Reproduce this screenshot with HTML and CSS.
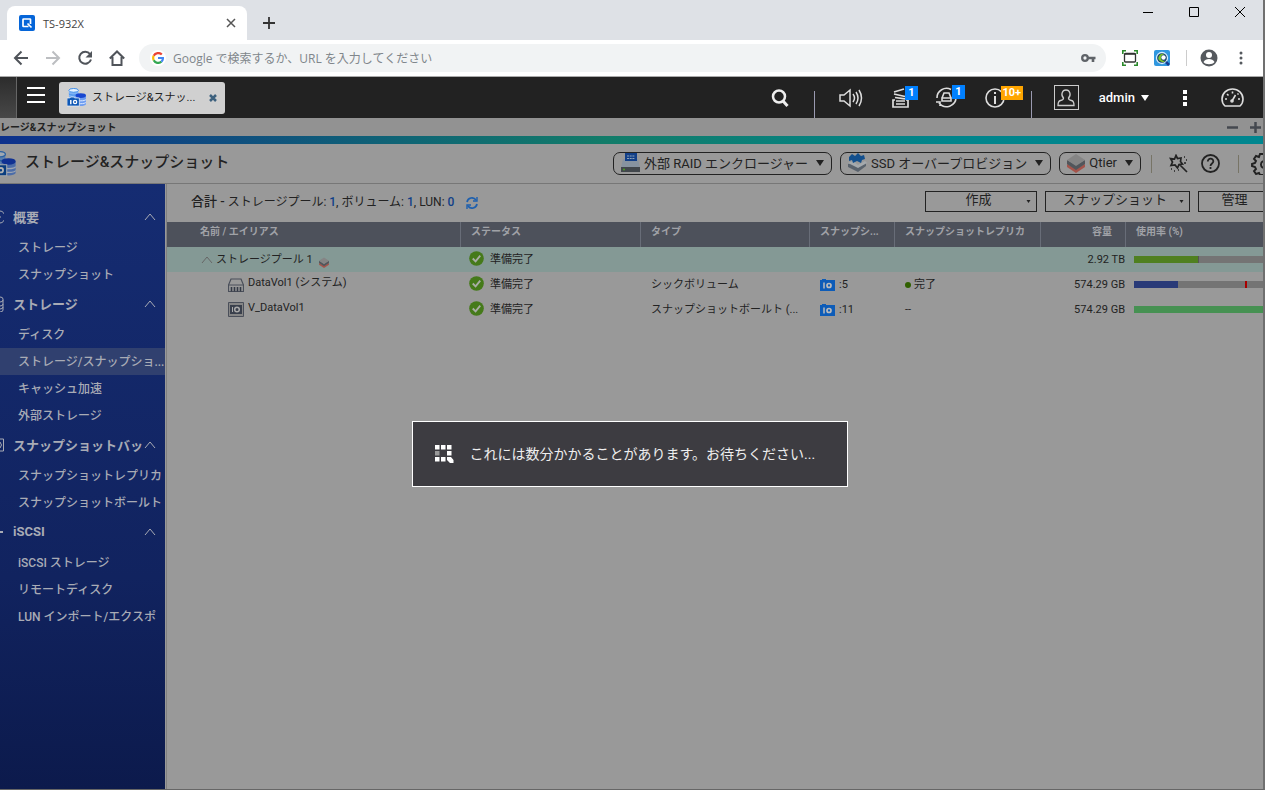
FILE: index.html
```html
<!DOCTYPE html>
<html lang="ja">
<head>
<meta charset="utf-8">
<title>TS-932X</title>
<link rel="stylesheet" href="styles.css">
</head>
<body>
<svg class="defs" aria-hidden="true">
  <symbol id="storage" viewBox="0 0 20 20">
    <path d="M2 2v7c0 3 10 3 10 0V2z" fill="#7fb2f5"/><ellipse cx="7" cy="2.500" rx="5" ry="2" fill="#e5f2ff" stroke="#3b8be8"/><path d="M2 6c1 2 9 2 10 0" stroke="#3b8be8" fill="none"/>
    <path d="M9 8v9c1 2.500 10 2.500 11 0V8z" fill="#6d9cf0"/><ellipse cx="14.500" cy="8" rx="5.500" ry="2.500" fill="#1746d0"/>
    <path d="M9 12c1 2 10 2 11 0M9 15c1 2 10 2 11 0" stroke="#dfebff" fill="none"/>
    <path d="M0 10.500h3l1-1h3l1 1h5V19H0z" fill="#0d57b5" stroke="#e8eef8" stroke-width=".8"/><path d="M4 12.500V17" stroke="#fff" stroke-width="1.500"/><circle cx="8.500" cy="14.800" r="1.700" fill="none" stroke="#fff" stroke-width="1.400"/>
  </symbol>
  <symbol id="up" viewBox="0 0 12 8"><path d="M1 7l5-6 5 6" fill="none" stroke="currentColor"/></symbol>
  <symbol id="ok" viewBox="0 0 16 16"><circle cx="8" cy="8" r="7.800" fill="#457a1a"/><path d="M4 8l3 3 5-6" fill="none" stroke="#a9ada5" stroke-width="2"/></symbol>
  <symbol id="cam" viewBox="0 0 15 12"><path d="M0 1h2V0h4v1h9v11H0z" fill="#0d5cb8"/><path d="M4 3.500v6" stroke="#bbb" stroke-width="1.500"/><circle cx="9" cy="6.500" r="2" fill="none" stroke="#bbb" stroke-width="1.700"/></symbol>
  <symbol id="tier" viewBox="0 0 18 20"><path d="M0 11l9 5 9-5v3l-9 6-9-6z" fill="#a4544b"/><path d="M0 7l9 5 9-5v4l-9 6-9-6z" fill="#51565b"/><path d="M9 1l9 6-9 6-9-6z" fill="#858585"/></symbol>
  <symbol id="caret" viewBox="0 0 8 6"><path d="M0 0h8L4 6z" fill="currentColor"/></symbol>
</svg>

<div class="window">
  <div class="tabs">
    <div class="tab">
      <svg width="16" height="16" viewBox="0 0 16 16"><rect width="16" height="16" rx="2" fill="#0565d8"/><path d="M9.500 11.500H4.500Q4 11.500 4 11V4.500Q4 4 4.500 4H11q.5 0 .5.500V9M8.500 8.500l4 4" fill="none" stroke="#fff" stroke-width="1.700"/></svg>
      <span class="tab-name">TS-932X</span>
      <button class="plain" aria-label="タブを閉じる"><svg width="10" height="10" viewBox="0 0 10 10"><path d="M1 1l8 8M9 1L1 9" stroke="#555" stroke-width="1.500"/></svg></button>
    </div>
    <button class="plain newtab" aria-label="新しいタブ"><svg width="12" height="12" viewBox="0 0 12 12"><path d="M6 0v12M0 6h12" stroke="#333" stroke-width="1.800"/></svg></button>
    <div class="win-controls">
      <button class="plain" aria-label="最小化"><svg width="10" height="10" viewBox="0 0 10 10"><path d="M0 5.500h10" stroke="#000"/></svg></button>
      <button class="plain" aria-label="最大化"><svg width="10" height="10" viewBox="0 0 10 10"><path d="M.5.500h9v9h-9z" fill="none" stroke="#000"/></svg></button>
      <button class="plain" aria-label="閉じる"><svg width="10" height="10" viewBox="0 0 10 10"><path d="M0 0l10 10M10 0L0 10" stroke="#000"/></svg></button>
    </div>
  </div>

  <div class="addressbar">
    <div class="nav">
      <button class="plain" aria-label="戻る"><svg width="16" height="16" viewBox="0 0 16 16"><path d="M15 8H2M8.500 1.500L2 8l6.500 6.500" fill="none" stroke="#50545a" stroke-width="2"/></svg></button>
      <button class="plain" aria-label="進む"><svg width="16" height="16" viewBox="0 0 16 16"><path d="M1 8h13M7.500 1.500L14 8l-6.500 6.500" fill="none" stroke="#bcbec1" stroke-width="2"/></svg></button>
      <button class="plain" aria-label="再読み込み"><svg width="16" height="16" viewBox="0 0 16 16"><path d="M13 4A6 6 0 1 0 14 9.500" fill="none" stroke="#50545a" stroke-width="2"/><path d="M15 1v6.500H8.500z" fill="#50545a"/></svg></button>
      <button class="plain" aria-label="ホーム"><svg width="16" height="16" viewBox="0 0 16 16"><path d="M.8 8.500L8 1.500l7.200 7M3.500 7v8h9V7" fill="none" stroke="#50545a" stroke-width="2"/></svg></button>
    </div>
    <div class="omnibox">
      <span class="g-mark"><svg width="12" height="12" viewBox="0 0 12 12" fill="none" stroke-width="2.200"><path d="M9.800 2.600A5 5 0 0 0 1.700 3.800" stroke="#ea4335"/><path d="M1.700 3.800a5 5 0 0 0 0 4.400" stroke="#fbbc05"/><path d="M1.700 8.200A5 5 0 0 0 9.400 9.700" stroke="#34a853"/><path d="M9.400 9.700A4.500 4.500 0 0 0 10.900 6H6" stroke="#4285f4"/></svg></span>
      <input type="text" aria-label="アドレス" placeholder="Google で検索するか、URL を入力してください">
      <svg width="15" height="10" viewBox="0 0 15 10"><circle cx="4" cy="5" r="2.800" fill="none" stroke="#5f6368" stroke-width="2.300"/><path d="M6 5h8.500M12 5v4" stroke="#5f6368" stroke-width="2.600"/></svg>
    </div>
    <div class="extensions">
      <svg width="16" height="16" viewBox="0 0 16 16"><path d="M.8 4V.8H4M12 .8h3.200V4M15.200 12v3.200H12M4 15.200H.8V12" fill="none" stroke="#2c8a2c" stroke-width="1.600"/><rect x="2.500" y="3.500" width="11" height="8.500" rx="1" fill="none" stroke="#333" stroke-width="1.300"/><path d="M2.500 4h11" stroke="#333" stroke-width="1.500"/></svg>
      <svg width="16" height="16" viewBox="0 0 16 16"><rect width="16" height="16" rx="2" fill="#3097df"/><circle cx="8" cy="8" r="5.500" fill="#173e68" stroke="#d5ecfb" stroke-width="1.300"/><path d="M10.500 4.500a4 4 0 1 0 1 6 3.200 3.200 0 1 1-1-6" fill="#7cc52c"/><circle cx="9.500" cy="7.500" r="2.200" fill="#fff"/><path d="M12 12l3 3" stroke="#173b90" stroke-width="2.500"/></svg>
      <span class="ext-line"></span>
      <svg width="18" height="18" viewBox="0 0 18 18"><circle cx="9" cy="9" r="8.500" fill="#55595e"/><circle cx="9" cy="6" r="3" fill="#fff"/><path d="M3.500 13c2-4 9-4 11 0-2 3-9 3-11 0" fill="#fff"/></svg>
      <svg width="4" height="14" viewBox="0 0 4 14" fill="#55595e"><circle cx="2" cy="2" r="1.500"/><circle cx="2" cy="7" r="1.500"/><circle cx="2" cy="12" r="1.500"/></svg>
    </div>
  </div>

  <header class="desk">
    <span class="desk-edge"></span>
    <button class="plain menu" aria-label="メニュー"><svg width="18" height="16" viewBox="0 0 18 16"><path d="M0 1h18M0 8h18M0 15h18" stroke="#fff" stroke-width="2"/></svg></button>
    <div class="task"><svg width="19" height="19"><use href="#storage"/></svg><span>ストレージ&amp;スナッ...</span><button class="plain" aria-label="閉じる"><svg width="8" height="8" viewBox="0 0 8 8"><path d="M1 1l6 6M7 1L1 7" stroke="#3d617e" stroke-width="2.500"/></svg></button></div>
    <div class="desk-tools">
      <button class="plain search" aria-label="検索"><svg width="18" height="18" viewBox="0 0 18 18"><circle cx="8" cy="7.500" r="6" fill="none" stroke="#eee" stroke-width="2.500"/><path d="M12 12l4.500 5" stroke="#eee" stroke-width="3"/></svg></button>
      <span class="desk-line"></span>
      <button class="plain sound" aria-label="音量"><svg width="24" height="20" viewBox="0 0 24 20" fill="none" stroke="#ddd" stroke-width="1.500"><path d="M1 7h4l6-5v16l-6-5H1zM14 6q3 4 0 8M17 4q4 6 0 12M20 2q5 8 0 16"/></svg></button>
      <button class="plain notice tasks" aria-label="タスク 1"><svg width="20" height="20" viewBox="0 0 20 20" fill="none" stroke="#ddd" stroke-width="1.700"><path d="M4 12H2v7h15v-7h-2M5 16h9M5 13h9M4 9.500l10 1.300M3 6l11 2.500M3 4l10-3"/></svg><b>1</b></button>
      <button class="plain notice device" aria-label="デバイス 1"><svg width="21" height="21" viewBox="0 0 21 21" fill="none" stroke="#ddd" stroke-width="1.600"><path d="M1 11A9.500 9.500 0 0 1 15 2.500M20 10A9.500 9.500 0 0 1 3 16M0 15h4v4M6 11l2-5h5l2 5M6 11h9v3H6z"/></svg><b>1</b></button>
      <button class="plain notice info" aria-label="通知 10+"><svg width="20" height="20" viewBox="0 0 20 20" fill="none" stroke="#ddd" stroke-width="1.600"><circle cx="10" cy="10" r="9"/><path d="M10 8v8M10 4v2" stroke-width="2"/></svg><b class="orange">10+</b></button>
      <span class="desk-line"></span>
      <span class="avatar"><svg width="18" height="18" viewBox="0 0 18 18" fill="none" stroke="#ccc" stroke-width="1.300"><path d="M6.500 9C3.500 6 5 1 9 1s5.500 5 2.500 8q0 2 3 2.500 2.500.5 2.500 5H1q0-4.500 2.500-5 3-.5 3-2.500z"/></svg></span>
      <button class="plain admin">admin <svg width="8" height="6"><use href="#caret"/></svg></button>
      <button class="plain dots" aria-label="その他"><svg width="4" height="16" viewBox="0 0 4 16"><path d="M0 0h4v4H0zM0 6h4v4H0zM0 12h4v4H0z" fill="#fff"/></svg></button>
      <button class="plain gauge" aria-label="ダッシュボード"><svg width="23" height="19" viewBox="0 0 23 19" fill="none" stroke="#ddd" stroke-width="1.600"><path d="M4 18Q1 15.500 1 11a10.500 10 0 0 1 21 0q0 4.500-3 7z"/><path d="M11 13L14.500 7M4 11h2M17 11h2M6 6l1.500 1.500M11.500 3.500v2M17.500 5.500l-1 1"/><circle cx="11" cy="13" r="1"/></svg></button>
    </div>
  </header>

  <div class="wintitle"><b>レージ&amp;スナップショット</b><span><svg width="11" height="11" viewBox="0 0 11 11"><path d="M0 5.500h11" stroke="#44484f" stroke-width="2.500"/></svg><svg width="11" height="11" viewBox="0 0 11 11"><path d="M0 5.500h11M5.500 0v11" stroke="#44484f" stroke-width="2.500"/></svg></span></div>
  <div class="stripe"></div>

  <div class="apphead">
    <svg class="dim" width="16" height="26" viewBox="8 0 12 20"><use href="#storage" width="20" height="20"/></svg>
    <h1>ストレージ&amp;スナップショット</h1>
    <button class="pill"><svg width="19" height="19" viewBox="0 0 19 19"><path d="M2 6h15l2 9H0z" fill="#8793a0"/><path d="M0 14h19v5H0z" fill="#42474c"/><path d="M4 0h12v8H4z" fill="#123f88"/><path d="M6 3h8M6 5.500h8" stroke="#8fa4b8" stroke-dasharray="2 .7"/><circle cx="3" cy="16.500" r="1" fill="#4c9e25"/></svg>外部 RAID エンクロージャー<svg class="caret" width="8" height="6"><use href="#caret"/></svg></button>
    <button class="pill"><svg width="19" height="20" viewBox="0 0 19 20"><path d="M0 11l5-2 5 4 8-4v4l-8 6L0 14z" fill="#59626c"/><path d="M0 10l5-2 5 4 7-4 2 2-9 5z" fill="#a4a9ad"/><path d="M1 4l3-3 3 2 3-3 3 3 3-1 1 4-3 1-1 3-4-2-4 2-1-3-3 1z" fill="#124f8d"/></svg>SSD オーバープロビジョン<svg class="caret" width="8" height="6"><use href="#caret"/></svg></button>
    <button class="pill"><svg width="18" height="20"><use href="#tier"/></svg>Qtier<svg class="caret" width="8" height="6"><use href="#caret"/></svg></button>
    <span class="app-line"></span>
    <button class="plain wand" aria-label="ウィザード"><svg width="19" height="19" viewBox="0 0 19 19" fill="none" stroke="#222" stroke-width="1.700"><path d="M7 1.500l1.500 3 3.500-.5-.5 3.500 2 2.500-3.500.5L8.500 14 6 11l-4 .5L3.500 8 1.500 4.500l4 .5zM11 11l7 7"/><path d="M15 3h1M17 6h1M15 9h2M2 15h1M5 17h1M9 16h1" stroke-width="1.300"/></svg></button>
    <button class="plain help" aria-label="ヘルプ"><svg width="19" height="19" viewBox="0 0 19 19" fill="none" stroke="#222" stroke-width="1.800"><circle cx="9.500" cy="9.500" r="8.500"/><path d="M6.800 7.500c0-4 5.700-3.500 5.500 0 0 2-2.800 2-2.800 4.500M9.500 13v2"/></svg></button>
    <span class="app-line"></span>
    <button class="plain gear" aria-label="設定"><svg width="12" height="22" viewBox="0 0 12 22" fill="none" stroke="#222" stroke-width="1.900"><path d="M12 1H9L8 4 5 3 3 6l2 2-1 2-3 1v2l3 1 1 2-2 2 2 3 3-1 1 2h3M12 8a4 4 0 0 0 0 7"/></svg></button>
  </div>

  <div class="workspace">
    <nav class="sidebar">
      <h2><svg class="side-icon" width="4" height="16" viewBox="0 0 4 16"><path d="M0 2a5 6 0 0 1 0 12M0 8h1" fill="none" stroke="currentColor"/></svg><span>概要</span><svg width="12" height="8"><use href="#up"/></svg></h2>
      <a href="#">ストレージ</a>
      <a href="#">スナップショット</a>
      <h2><svg class="side-icon" width="4" height="16" viewBox="0 0 4 16"><path d="M0 1q3 0 3 2v11q0 2-3 2M0 6q3 0 3-2M0 10q3 0 3-2M0 13q3 0 3-2" fill="none" stroke="currentColor"/></svg><span>ストレージ</span><svg width="12" height="8"><use href="#up"/></svg></h2>
      <a href="#">ディスク</a>
      <a href="#" class="selected">ストレージ/スナップショ...</a>
      <a href="#">キャッシュ加速</a>
      <a href="#">外部ストレージ</a>
      <h2><svg class="side-icon" width="4" height="16" viewBox="0 0 4 16"><path d="M0 2h3.500v12H0M0 5q3 3 0 6" fill="none" stroke="currentColor"/></svg><span>スナップショットバッ</span><svg width="12" height="8"><use href="#up"/></svg></h2>
      <a href="#">スナップショットレプリカ</a>
      <a href="#">スナップショットボールト</a>
      <h2><svg class="side-icon" width="4" height="16" viewBox="0 0 4 16"><path d="M0 8h3" stroke="currentColor" stroke-width="2"/></svg><span>iSCSI</span><svg width="12" height="8"><use href="#up"/></svg></h2>
      <a href="#">iSCSI ストレージ</a>
      <a href="#">リモートディスク</a>
      <a href="#">LUN インポート/エクスポ</a>
    </nav>

    <main>
      <div class="summary">
        <p><b>合計 -</b> ストレージプール: <i>1</i>, ボリューム: <i>1</i>, LUN: <i>0</i></p>
        <button class="plain" aria-label="更新"><svg width="12" height="12" viewBox="0 0 12 12" fill="none" stroke="#1d5fae" stroke-width="1.700"><path d="M1 5a5 5 0 0 1 9-2M11 7a5 5 0 0 1-9 2"/><path d="M11 0v4H7M1 12V8h4" stroke-width="1.400"/></svg></button>
        <div class="actions">
          <button class="create"><span>作成</span><svg width="5" height="3"><use href="#caret"/></svg></button>
          <button class="snap"><span>スナップショット</span><svg width="5" height="3"><use href="#caret"/></svg></button>
          <button class="manage"><span>管理</span></button>
        </div>
      </div>
      <table>
        <colgroup><col class="c-name"><col class="c-status"><col class="c-type"><col class="c-snap"><col class="c-replica"><col class="c-size"><col></colgroup>
        <thead><tr><th class="name">名前 / エイリアス</th><th>ステータス</th><th>タイプ</th><th>スナップシ...</th><th>スナップショットレプリカ</th><th class="size">容量</th><th>使用率 (%)</th></tr></thead>
        <tbody>
          <tr class="pool"><td class="name"><div class="cell"><svg class="fold" width="12" height="8"><use href="#up"/></svg>ストレージプール 1<svg class="tier" width="10" height="11"><use href="#tier"/></svg></div></td><td class="status"><div class="cell"><svg width="15" height="15"><use href="#ok"/></svg>準備完了</div></td><td></td><td></td><td></td><td class="size">2.92 TB</td><td class="usage"><div class="bar"><span class="green" style="width:50%"></span></div></td></tr>
          <tr><td class="name vol"><div class="cell"><svg width="16" height="14" viewBox="0 0 16 14"><path d="M3 1h10l2.500 6v6.500H.5V7z" fill="none" stroke="#4a4f5a" stroke-width="1.200"/><path d="M.5 7h15" stroke="#4a4f5a"/><path d="M3.500 9v4.500M6.500 9v4.500M9.500 9v4.500M12.500 9v4.500" stroke="#343a46" stroke-width="1.600"/></svg>DataVol1 (システム)</div></td><td class="status"><div class="cell"><svg width="15" height="15"><use href="#ok"/></svg>準備完了</div></td><td>シックボリューム</td><td><div class="cell"><svg width="15" height="12"><use href="#cam"/></svg>:5</div></td><td><div class="cell done"><span class="dot"></span>完了</div></td><td class="size">574.29 GB</td><td class="usage"><div class="bar"><span class="blue" style="width:34%"></span><span class="limit"></span></div></td></tr>
          <tr><td class="name vol"><div class="cell"><svg width="16" height="15" viewBox="0 0 16 15"><path d="M.5.500h15v14H.5z" fill="#858585" stroke="#4a4f5a"/><path d="M2 3h12v9H2z" fill="#3a404c"/><path d="M4.500 5v5" stroke="#aaa"/><circle cx="9" cy="7.500" r="2.300" fill="none" stroke="#aaa" stroke-width="1.500"/></svg>V_DataVol1</div></td><td class="status"><div class="cell"><svg width="15" height="15"><use href="#ok"/></svg>準備完了</div></td><td>スナップショットボールト (...</td><td><div class="cell"><svg width="15" height="12"><use href="#cam"/></svg>:11</div></td><td>--</td><td class="size">574.29 GB</td><td class="usage"><div class="bar"><span class="mint" style="width:100%"></span></div></td></tr>
        </tbody>
      </table>
    </main>
  </div>
</div>

<div class="wait" role="alertdialog" aria-label="処理中">
  <svg width="19" height="19" viewBox="0 0 19 19" fill="#fff"><path d="M0 0h4.500v4.500H0zM6 0h4.500v4.500H6zM12 0h4.500v4.500H12zM12 6h4.500v4.500H12zM0 12h4.500v4.500H0zM6 12h4.500v4.500H6zM12 12h4l2.500 3v3H15l-3-3z"/><path d="M0 6h4.500v4.500H0z" fill="#999"/></svg>
  <p>これには数分かかることがあります。お待ちください...</p>
</div>
</body>
</html>
```
FILE: styles.css
```css
* { box-sizing: border-box; }
body { margin: 0; font-family: Roboto, "Noto Sans CJK JP", sans-serif; font-size: 12px; color: #222; background: #999; overflow: hidden; }
h1, h2, p { margin: 0; }
svg { flex: none; display: block; }
button { font: inherit; color: inherit; }
.defs { position: absolute; width: 0; height: 0; }
.plain { display: flex; align-items: center; border: 0; padding: 0; background: none; }
.window { display: flex; flex-direction: column; min-height: 100vh; border-right: 2px solid #707070; border-bottom: 1px solid #666; }

.tabs { display: flex; height: 40px; background: #dee1e6; padding-left: 7px; }
.tab { display: flex; align-items: center; gap: 8px; width: 240px; margin-top: 6px; padding: 0 11px 0 12px; background: #fff; border-radius: 8px 8px 0 0; font: 11px "Open Sans", sans-serif; color: #444; }
.tab-name { flex: 1; }
.newtab { margin: 6px 0 0 16px; }
.win-controls { display: flex; gap: 36px; margin: 0 18px 16px auto; }

.addressbar { display: flex; align-items: center; height: 37px; background: #fff; border-bottom: 1px solid #aaa; padding: 0 20px 0 13px; }
.nav { display: flex; gap: 16px; }
.omnibox { display: flex; align-items: center; flex: 1; height: 28px; margin-left: 14px; padding: 0 10px 0 11px; background: #f1f3f4; border-radius: 14px; }
.g-mark { display: flex; align-items: center; justify-content: center; width: 16px; height: 16px; border-radius: 8px; background: #fff; }
.omnibox input { flex: 1; min-width: 0; border: 0; padding: 0 7px; background: none; font: 12px "Open Sans", "Noto Sans CJK JP", sans-serif; }
.omnibox input::placeholder { color: #80868b; opacity: 1; }
.extensions { display: flex; align-items: center; gap: 16px; margin-left: 16px; }
.ext-line { width: 1px; height: 16px; background: #ccc; }
.extensions .ext-line + svg { margin-right: 5px; margin-left: -3px; }

.desk { display: flex; align-items: center; height: 41px; background: #222; color: #fff; }
.desk-edge { width: 17px; align-self: stretch; background: linear-gradient(#2c2c2c, #484848); border-right: 1px solid #666; }
.menu { margin: 0 14px 5px 10px; }
.task { display: flex; align-items: center; gap: 6px; width: 166px; height: 32px; padding: 0 8px; border-radius: 3px; background: #d0d0d0; color: #222; font-size: 11px; }
.task span { flex: 1; padding-bottom: 4px; white-space: nowrap; }
.desk-tools { display: flex; align-items: center; align-self: stretch; margin-left: auto; padding-right: 19px; }
.desk-line { width: 1px; height: 27px; align-self: flex-end; background: #9a9ab0; }
.search { margin-right: 25px; }
.sound { margin: 0 28px 0 24px; }
.notice { position: relative; }
.notice b { position: absolute; left: 14px; top: -2px; min-width: 13px; height: 14px; padding: 0 2px; background: #0080ff; font-size: 11px; line-height: 14px; text-align: center; }
.notice.device b { left: 16px; }
.notice b.orange { left: 16px; width: 22px; padding: 0; background: #ffa500; }
.tasks { margin-right: 25px; }
.device { margin-right: 28px; }
.info { margin-right: 26px; }
.avatar { display: flex; align-items: center; justify-content: center; width: 25px; height: 25px; margin: 0 20px 0 22px; border: 1px solid #ccc; }
.admin { gap: 6px; font-size: 13px; font-weight: 500; }
.dots { margin: 0 34px; }

.wintitle { display: flex; justify-content: space-between; align-items: center; height: 18px; background: #929292; padding: 0 2px 2px 0; font-size: 10px; white-space: nowrap; }
.wintitle span { display: flex; gap: 12px; padding-top: 2px; }
.stripe { height: 8px; background: linear-gradient(90deg, #0e318c, #0f6674 33%, #127c69 48%, #00858c 75%, #00868f); }
.apphead { display: flex; align-items: center; height: 40px; border-bottom: 1px solid #777; white-space: nowrap; }
.apphead h1 { flex: 1; margin-left: 9px; padding-bottom: 6px; font-size: 15px; font-weight: 500; }
.dim { filter: brightness(.7); }
.pill { display: flex; align-items: center; gap: 4px; height: 23px; margin-right: 8px; padding: 0 7px 2px; border: 1px solid #222; border-radius: 7px; background: none; font-size: 13px; }
.pill .caret { margin: 1px 0 0 4px; }
.app-line { width: 1px; height: 18px; background: #777466; }
.apphead .app-line { margin-left: 2px; }
.wand { margin: 0 13px 0 17px; }
.help { margin-right: 16px; }
.gear { margin-left: 12px; }

.workspace { display: flex; flex: 1; }
.sidebar { width: 165px; padding-top: 17px; background: linear-gradient(#152c72, #11235f 65%, #0c1a4c); color: #a8abb5; }
.sidebar h2 { display: flex; align-items: center; height: 33px; padding: 0 9px 2px 0; font-size: 13px; font-weight: 700; white-space: nowrap; }
.sidebar h2 span { flex: 1; min-width: 0; margin-left: 9px; overflow: hidden; }
.sidebar a { display: block; height: 27px; padding-left: 18px; line-height: 28px; color: inherit; text-decoration: none; white-space: nowrap; overflow: hidden; font-weight: 500; }
.sidebar a.selected { background: #30406f; }
main { flex: 1; min-width: 0; margin-left: 1px; border-left: 1px solid #808080; }
.summary { display: flex; align-items: center; height: 38px; padding-left: 24px; white-space: nowrap; }
.summary p { margin-right: 12px; padding-bottom: 6px; }
.summary b { font-size: 13px; font-weight: 500; }
.summary i { font-style: normal; font-weight: 500; color: #103f88; }
.actions { display: flex; gap: 8px; margin: 0 0 3px auto; }
.actions button { display: flex; align-items: center; height: 21px; padding: 0 5px 1px; border: 1px solid #222; background: none; font-size: 13px; }
.actions span { flex: 1; text-align: center; line-height: 18px; padding-bottom: 2px; }
.actions .create { width: 112px; }
.actions .snap { width: 145px; }
.actions .manage { width: 65px; border-right: 0; padding-left: 12px; }

table { width: 100%; table-layout: fixed; border-collapse: separate; border-spacing: 0; font-size: 11px; }
.c-name { width: 294px; }
.c-status { width: 180px; }
.c-type { width: 169px; }
.c-snap { width: 85px; }
.c-replica { width: 146px; }
.c-size { width: 85px; }
th, td { height: 25px; padding: 0 0 0 10px; text-align: left; white-space: nowrap; overflow: hidden; line-height: 16px; }
th { padding-bottom: 6px; background: #4d515b; color: #a0a2a7; font-size: 10px; font-weight: 700; border-right: 1px solid #686d78; }
th:last-child { border-right: 0; }
th.name { padding-left: 33px; }
td.name { padding-left: 34px; }
td.name.vol { padding: 0 0 4px 61px; }
.vol svg { margin-top: 4px; }
td.status { padding-left: 8px; }
.size { text-align: right; }
th.size { padding-right: 13px; }
td.size { padding: 0 1px 0 0; }
.pool td { background: #849995; }
.cell { display: flex; align-items: center; gap: 4px; }
.pool .name .cell { gap: 3px; }
.status .cell { gap: 6px; }
.status svg { margin-bottom: 3px; }
.fold { color: #666; }
.tier { margin: 6px 0 0 3px; }
.done { gap: 3px; }
.dot { width: 6px; height: 6px; border-radius: 3px; background: #306000; }
td.usage { padding-left: 8px; }
.bar { position: relative; height: 7px; background: #747474; }
.bar span { display: block; height: 7px; }
.green { background: #4f8020; border-right: 1px solid #555; }
.blue { background: #293a78; }
.mint { background: #469152; }
.bar .limit { position: absolute; left: 86%; top: 0; width: 2px; background: #a00; }

.wait { position: absolute; left: 50%; top: 421px; display: flex; align-items: center; gap: 16px; width: 436px; height: 66px; margin-left: -221px; padding-left: 22px; border: 1px solid #fff; background: #3d3c41; color: #eee; font-size: 14px; white-space: nowrap; }
.wait p { padding-bottom: 2px; }
```
